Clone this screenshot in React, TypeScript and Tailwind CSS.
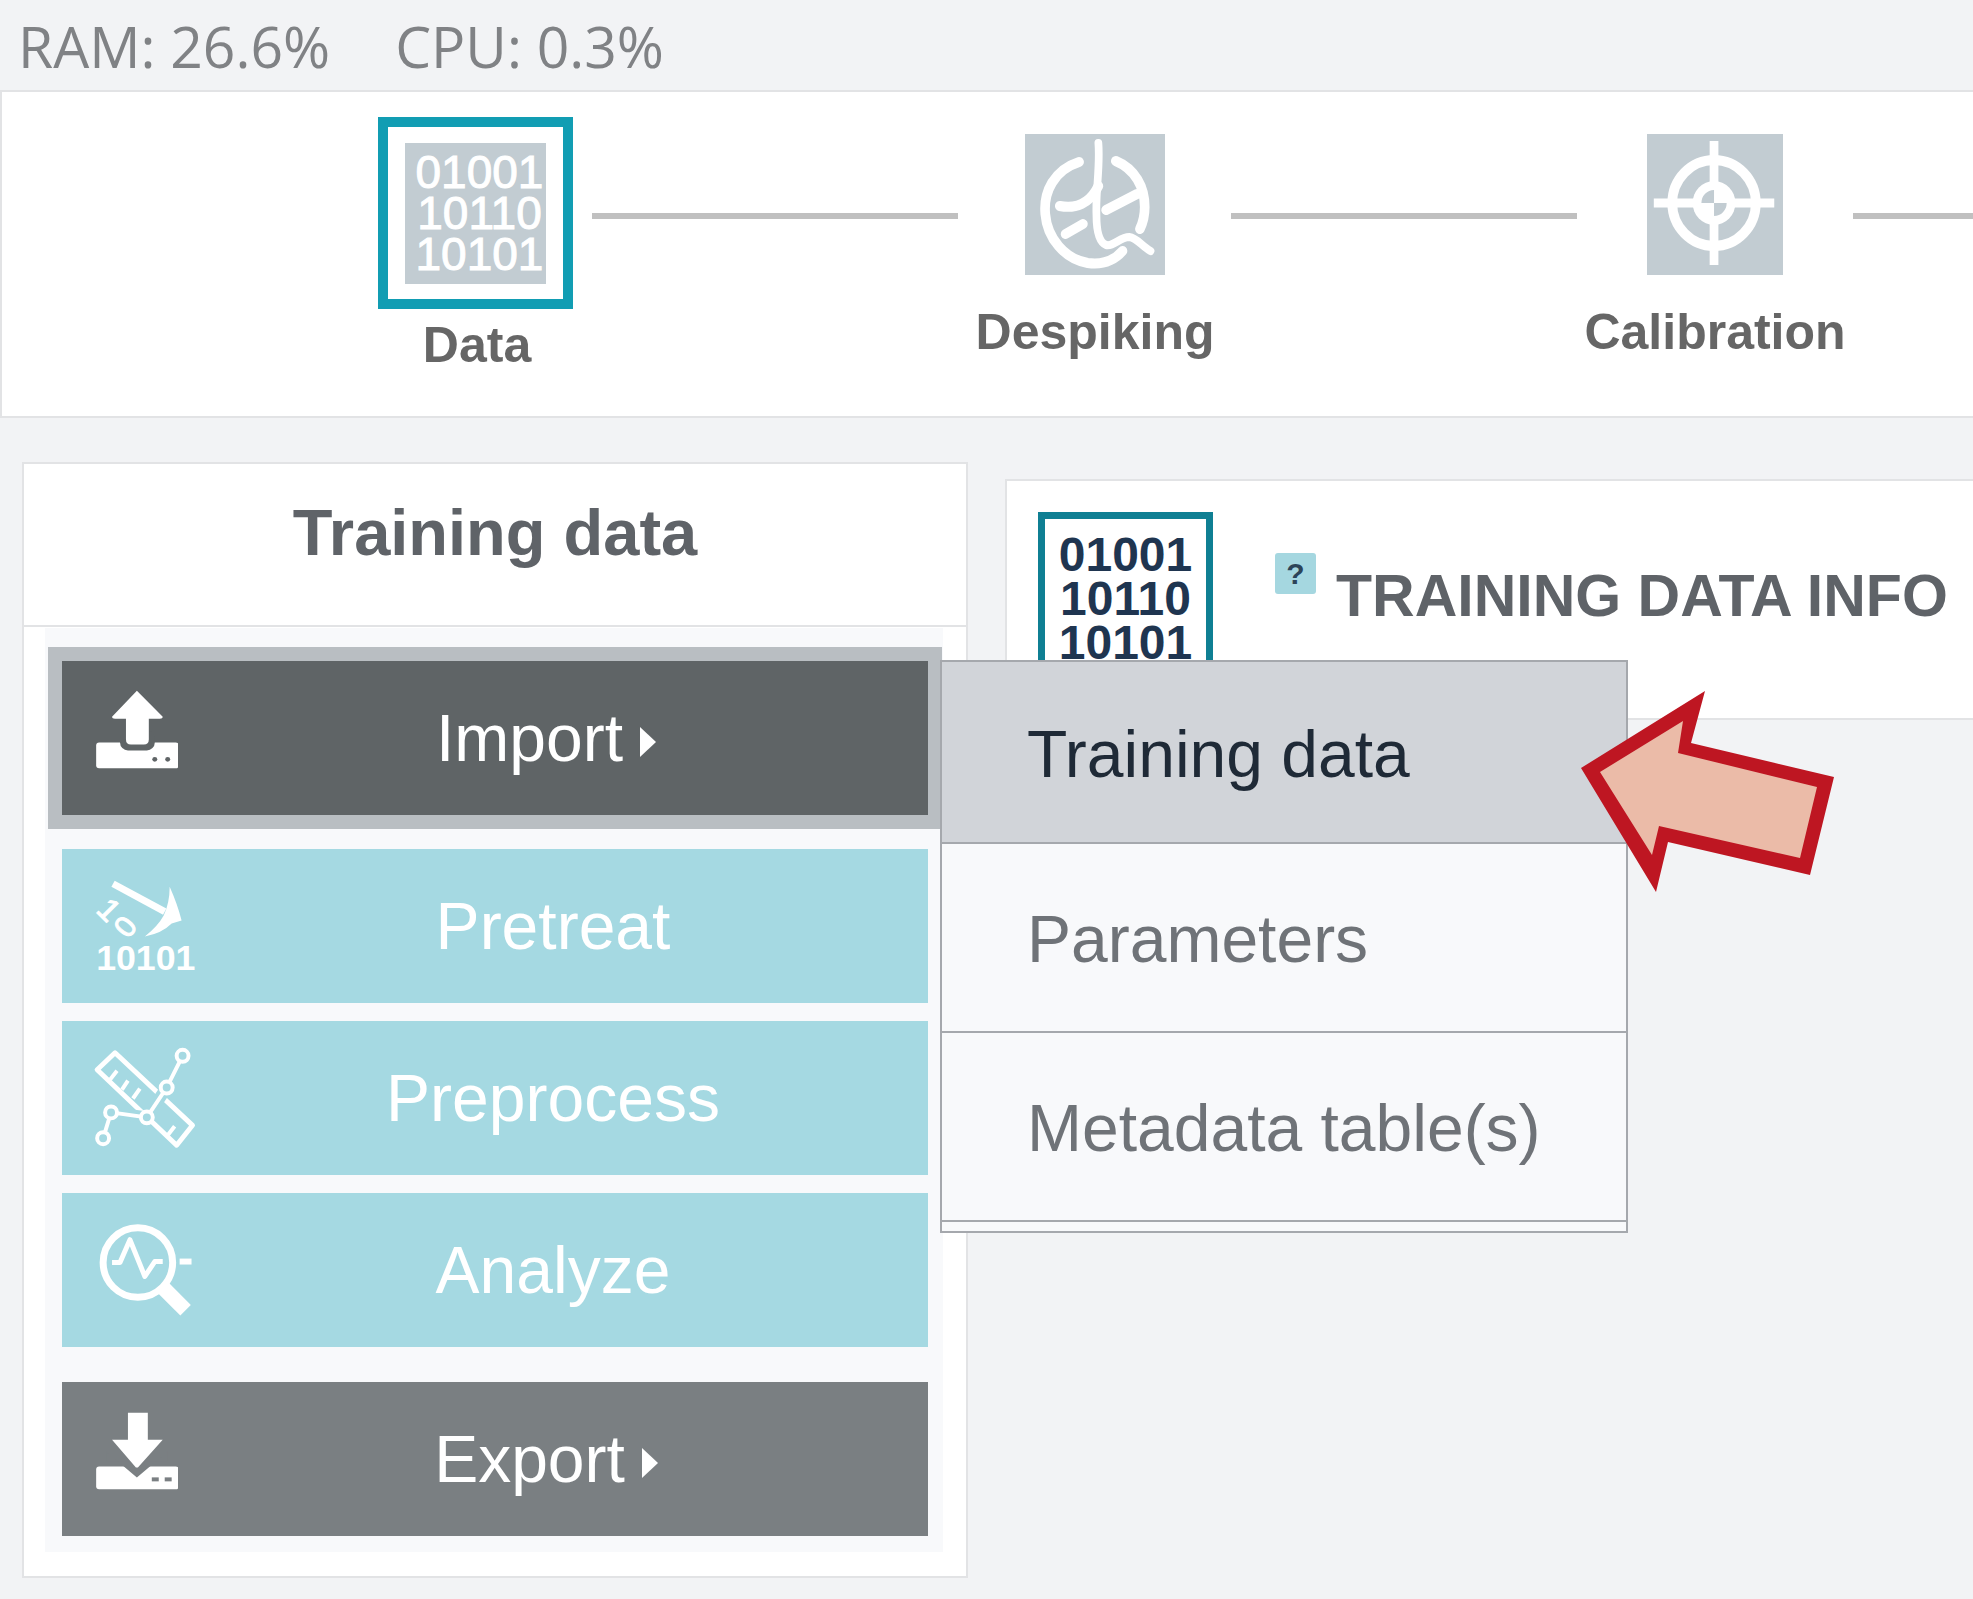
import React from "react";

function Binary({ className }: { className: string }) {
  return (
    <div className={className}>
      <div>01001</div>
      <div>10110</div>
      <div>10101</div>
    </div>
  );
}

function DespikingIcon() {
  return (
    <svg viewBox="0 0 145 141" preserveAspectRatio="none" className="h-[141px] w-[140px]">
      <rect width="145" height="141" fill="#c2ccd2" />
      <g fill="none" stroke="#fff" strokeWidth="10" strokeLinecap="round" strokeLinejoin="round">
        <path d="M56 28C30 36 19 58 21 80c2 24 20 45 44 49 15 2 27-2 36-12" />
        <path d="M94 27c20 8 30 26 30 46 0 10-2 16-5 22" />
        <path d="M36 72c16 3 31-2 40-20" />
        <path d="M42 100 L60 90 M84 76 L116 60" />
      </g>
      <path d="M76 9c2 24-3 48-2 72 0 14 2 27 10 30 8 2 14-8 24-8 8 1 13 9 22 14" fill="none" stroke="#fff" strokeWidth="8" strokeLinecap="round" strokeLinejoin="round" />
    </svg>
  );
}

function CalibrationIcon() {
  return (
    <svg viewBox="0 0 140 141" preserveAspectRatio="none" className="h-[141px] w-[136px]">
      <rect width="140" height="141" fill="#c2ccd2" />
      <circle cx="69" cy="69" r="43" fill="none" stroke="#fff" strokeWidth="10" />
      <path d="M7 69H131M69 7V131" stroke="#fff" strokeWidth="9" />
      <circle cx="69" cy="69" r="22" fill="#fff" />
      <path d="M69 69V56A13 13 0 0 0 56 69ZM69 69V82A13 13 0 0 0 82 69Z" fill="#c2ccd2" />
    </svg>
  );
}

function UploadIcon() {
  return (
    <svg viewBox="0 0 116 155" className="h-full w-[116px]">
      <rect x="34" y="82" width="83" height="26" rx="3" fill="#fff" />
      <rect x="58" y="70" width="35" height="20" rx="8" fill="#5f6466" />
      <path d="M75 30 L101 56 Q101 58 98 58 L87 58 V79 Q87 84 82 84 H69 Q64 84 64 79 V58 H53 Q50 58 50 56 Z" fill="#fff" />
      <circle cx="93" cy="99" r="2.5" fill="#5f6466" />
      <circle cx="106" cy="99" r="2.5" fill="#5f6466" />
    </svg>
  );
}

function DownloadIcon() {
  return (
    <svg viewBox="0 0 116 155" className="h-full w-[116px]">
      <rect x="34" y="85" width="83" height="23" rx="3" fill="#fff" />
      <path d="M44 70 L75 96 L106 70 V80 H44 Z" fill="#7a7f82" />
      <path d="M66 31 H86 V58 H101 L76 86 H74 L50 58 H66 Z" fill="#fff" />
      <rect x="90" y="96" width="7" height="4" fill="#7a7f82" />
      <rect x="103" y="96" width="7" height="4" fill="#7a7f82" />
    </svg>
  );
}

function PretreatIcon() {
  return (
    <svg viewBox="0 0 116 155" className="h-full w-[116px] overflow-visible">
      <path d="M51 35 L103 63" stroke="#fff" strokeWidth="7" />
      <path d="M108 38 Q116 56 120 72 L110 75 Q100 85 83 88 Q96 78 102 67 Q108 54 108 38 Z" fill="#fff" />
      <text x="0" y="0" fontSize="32" fill="#fff" stroke="#fff" strokeWidth="1" textAnchor="middle" dominantBaseline="central" transform="translate(47 61) rotate(45)">
        1
      </text>
      <text x="0" y="0" fontSize="30" fill="#fff" stroke="#fff" strokeWidth="1" textAnchor="middle" dominantBaseline="central" transform="translate(63 78) rotate(-52)">
        0
      </text>
      <text x="34" y="122" fontSize="36" fontWeight="700" fill="#fff" textLength="100" lengthAdjust="spacing">
        10101
      </text>
    </svg>
  );
}

function PreprocessIcon() {
  return (
    <svg viewBox="0 0 116 155" className="h-full w-[116px] overflow-visible">
      <path d="M35 49 L53 32 L131 105 L115 125 Z" fill="none" stroke="#fff" strokeWidth="5" strokeLinejoin="round" />
      <path d="M48 59 L55 50 M60 69 L66 60 M71 78 L78 68 M106 115 L113 106" stroke="#fff" strokeWidth="4" />
      <path d="M121 35 L105 67 L85 97 L49 92 L41 118" fill="none" stroke="#a5d9e2" strokeWidth="12" />
      <path d="M121 35 L105 67 L85 97 L49 92 L41 118" fill="none" stroke="#fff" strokeWidth="4" />
      <g fill="#a5d9e2" stroke="#fff" strokeWidth="4">
        <circle cx="121" cy="35" r="6" />
        <circle cx="105" cy="67" r="6" />
        <circle cx="85" cy="97" r="6" />
        <circle cx="49" cy="92" r="6" />
        <circle cx="41" cy="118" r="6" />
      </g>
    </svg>
  );
}

function AnalyzeIcon() {
  return (
    <svg viewBox="0 0 116 155" className="h-full w-[116px] overflow-visible">
      <circle cx="76" cy="70" r="35" fill="none" stroke="#fff" strokeWidth="7" />
      <path d="M100 94 L124 118" stroke="#fff" strokeWidth="15" />
      <path d="M118 69 H130" stroke="#fff" strokeWidth="6" />
      <path d="M50 70 H58 L68 47 L83 84 L93 69 H101" fill="none" stroke="#fff" strokeWidth="5" strokeLinejoin="round" />
    </svg>
  );
}

function Caret() {
  return (
    <svg viewBox="0 0 16 30" className="ml-[17px] mt-[8px] h-[30px] w-[16px]">
      <path d="M0 0 L16 15 L0 30 Z" fill="#fff" />
    </svg>
  );
}

function ActionButton({
  label,
  icon,
  caret,
  className,
}: {
  label: string;
  icon: React.ReactNode;
  caret?: boolean;
  className: string;
}) {
  return (
    <div className={`flex h-[154px] items-center text-[66px] text-white ${className}`}>
      {icon}
      <div className={`flex flex-1 items-center justify-center ${caret ? "pr-[14px]" : ""}`}>
        {label}
        {caret && <Caret />}
      </div>
    </div>
  );
}

export default function App() {
  return (
    <div className="relative h-[1599px] overflow-hidden bg-[#f2f3f5] font-['Liberation_Sans',Arial,sans-serif]">
      {/* Status bar */}
      <div className="flex h-[90px] items-center gap-[65px] pl-[18px] pt-[4px] font-['Open_Sans',sans-serif] text-[57px] font-normal text-[#808285]">
        <span>RAM: 26.6%</span>
        <span>CPU: 0.3%</span>
      </div>

      {/* Workflow steps */}
      <div className="flex h-[328px] items-start border-y-2 border-l-2 border-[#e2e3e5] bg-white pl-[376px]">
        <div className="mt-[25px] flex w-[195px] shrink-0 flex-col items-center">
          <div className="flex h-[192px] w-[195px] items-center justify-center border-[10px] border-[#119db3] bg-white">
            <Binary className="flex h-[141px] w-[141px] flex-col items-center justify-center bg-[#c2ccd2] pl-[8px] text-[46px] leading-[41px] text-white [-webkit-text-stroke:1px_white]" />
          </div>
          <div className="mt-[8px] pl-[3px] text-[50px] font-bold leading-[56px] text-[#666]">Data</div>
        </div>
        <div className="ml-[19px] mt-[121px] h-[6px] w-[366px] shrink-0 bg-[#c0c0c0]" />
        <div className="ml-[67px] mt-[42px] flex w-[140px] shrink-0 flex-col items-center">
          <DespikingIcon />
          <div className="mt-[29px] whitespace-nowrap text-[50px] font-bold leading-[56px] text-[#666]">Despiking</div>
        </div>
        <div className="ml-[66px] mt-[121px] h-[6px] w-[346px] shrink-0 bg-[#c0c0c0]" />
        <div className="ml-[70px] mt-[42px] flex w-[136px] shrink-0 flex-col items-center">
          <CalibrationIcon />
          <div className="mt-[29px] whitespace-nowrap text-[50px] font-bold leading-[56px] text-[#666]">Calibration</div>
        </div>
        <div className="ml-[70px] mt-[121px] h-[6px] flex-1 bg-[#c0c0c0]" />
      </div>

      <div className="ml-[22px] mt-[44px] flex items-start">
        {/* Training data panel */}
        <div className="h-[1116px] w-[946px] shrink-0 border-2 border-[#e2e3e5] bg-white">
          <div className="flex h-[163px] items-start justify-center border-b-2 border-[#e2e3e5] pt-[32px] text-[65px] font-bold leading-[74px] text-[#5f6368]">
            Training data
          </div>
          <div className="ml-[21px] mr-[23px] mt-[1px] h-[924px] bg-[#f8f9fb] pt-[19px]">
            <div className="ml-[3px] w-[894px] border-[14px] border-[#b9bec2] bg-[#5f6466]">
              <ActionButton label="Import" icon={<UploadIcon />} caret className="" />
            </div>
            <div className="ml-[17px] mr-[15px] mt-[20px] flex flex-col gap-[18px]">
              <ActionButton label="Pretreat" icon={<PretreatIcon />} className="bg-[#a5d9e2]" />
              <ActionButton label="Preprocess" icon={<PreprocessIcon />} className="bg-[#a5d9e2]" />
              <ActionButton label="Analyze" icon={<AnalyzeIcon />} className="bg-[#a5d9e2]" />
              <ActionButton label="Export" icon={<DownloadIcon />} caret className="mt-[17px] bg-[#7a7f82]" />
            </div>
          </div>
        </div>

        {/* Info card */}
        <div className="ml-[37px] mt-[17px] flex h-[241px] flex-1 items-start border-y-2 border-l-2 border-[#e2e3e5] bg-white pl-[31px] pt-[31px]">
          <Binary className="flex h-[178px] w-[175px] shrink-0 flex-col items-center overflow-hidden border-[7px] border-[#0f7f93] pt-[14px] text-[48px] font-bold leading-[44px] text-[#1f3550]" />
          <div className="ml-[62px] mt-[41px] flex h-[41px] w-[41px] shrink-0 items-center justify-center rounded-[3px] bg-[#a5d7e0] text-[30px] font-bold text-[#2c4458]">
            ?
          </div>
          <div className="ml-[20px] mt-[51px] whitespace-nowrap text-[59px] font-bold leading-[66px] text-[#5f6368]">
            TRAINING DATA INFO
          </div>
        </div>
      </div>

      {/* Import dropdown */}
      <div className="absolute left-[940px] top-[660px] h-[573px] w-[688px] border-2 border-[#a5a8ad] bg-[#f8f9fb] text-[66px]">
        <div className="flex h-[182px] items-center border-b-2 border-[#a5a8ad] bg-[#d1d4d9] pl-[85px] pt-[4px] text-[#1f2a37]">Training data</div>
        <div className="flex h-[189px] items-center border-b-2 border-[#a5a8ad] pl-[85px] pt-[4px] text-[#6f7378]">Parameters</div>
        <div className="flex h-[189px] items-center border-b-2 border-[#a5a8ad] pl-[85px] pt-[4px] text-[#6f7378]">Metadata table(s)</div>
      </div>

      {/* Callout arrow */}
      <svg viewBox="0 0 1973 1599" className="pointer-events-none absolute left-0 top-0 h-[1599px] w-[1973px]">
        <polygon points="1581,768 1705,691 1691,743 1834,777 1810,875 1668,842 1656,892" fill="#be1622" />
        <polygon points="1600,772 1683,721 1678,753 1817,787 1800,858 1659,826 1652,855" fill="#ebbba8" />
      </svg>
    </div>
  );
}
